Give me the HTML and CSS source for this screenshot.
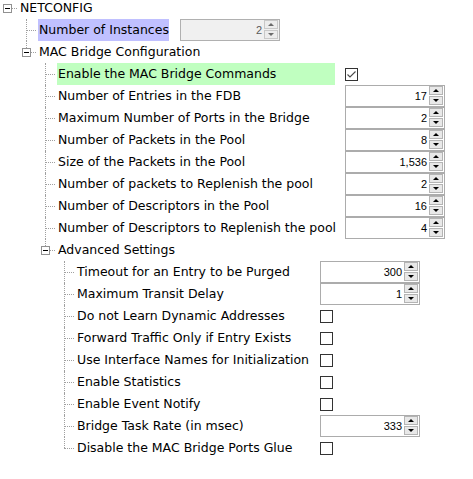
FILE: index.html
```html
<!DOCTYPE html>
<html>
<head>
<meta charset="utf-8">
<link rel="stylesheet" href="styles.css">
</head>
<body>
<div class="tree">
  <div class="lbl exp root"><span class="box"></span>NETCONFIG</div>
  <div class="group">
    <div class="props l1">
      <div class="lbl sel-blue">Number of Instances</div>
      <div class="ctrl"><div class="spin disabled"><span class="val">2</span><span class="btns"><span class="btn up"></span><span class="btn down"></span></span></div></div>
    </div>
    <div class="lbl exp last"><span class="box"></span>MAC Bridge Configuration</div>
    <div class="group">
      <div class="props l2">
        <div class="lbl sel-green">Enable the MAC Bridge Commands</div>
        <div class="ctrl"><span class="chk"><svg width="11" height="11" viewBox="0 0 11 11"><polyline points="1.5,5.5 4,8 9.5,2.5" fill="none" stroke="#4a4a4a" stroke-width="1.1"/></svg></span></div>
        <div class="lbl">Number of Entries in the FDB</div>
        <div class="ctrl"><div class="spin"><span class="val">17</span><span class="btns"><span class="btn up"></span><span class="btn down"></span></span></div></div>
        <div class="lbl">Maximum Number of Ports in the Bridge</div>
        <div class="ctrl"><div class="spin"><span class="val">2</span><span class="btns"><span class="btn up"></span><span class="btn down"></span></span></div></div>
        <div class="lbl">Number of Packets in the Pool</div>
        <div class="ctrl"><div class="spin"><span class="val">8</span><span class="btns"><span class="btn up"></span><span class="btn down"></span></span></div></div>
        <div class="lbl">Size of the Packets in the Pool</div>
        <div class="ctrl"><div class="spin"><span class="val">1,536</span><span class="btns"><span class="btn up"></span><span class="btn down"></span></span></div></div>
        <div class="lbl">Number of packets to Replenish the pool</div>
        <div class="ctrl"><div class="spin"><span class="val">2</span><span class="btns"><span class="btn up"></span><span class="btn down"></span></span></div></div>
        <div class="lbl">Number of Descriptors in the Pool</div>
        <div class="ctrl"><div class="spin"><span class="val">16</span><span class="btns"><span class="btn up"></span><span class="btn down"></span></span></div></div>
        <div class="lbl">Number of Descriptors to Replenish the pool</div>
        <div class="ctrl"><div class="spin"><span class="val">4</span><span class="btns"><span class="btn up"></span><span class="btn down"></span></span></div></div>
      </div>
      <div class="lbl exp last"><span class="box"></span>Advanced Settings</div>
      <div class="group">
        <div class="props l3">
          <div class="lbl">Timeout for an Entry to be Purged</div>
          <div class="ctrl"><div class="spin"><span class="val">300</span><span class="btns"><span class="btn up"></span><span class="btn down"></span></span></div></div>
          <div class="lbl">Maximum Transit Delay</div>
          <div class="ctrl"><div class="spin"><span class="val">1</span><span class="btns"><span class="btn up"></span><span class="btn down"></span></span></div></div>
          <div class="lbl">Do not Learn Dynamic Addresses</div>
          <div class="ctrl"><span class="chk"></span></div>
          <div class="lbl">Forward Traffic Only if Entry Exists</div>
          <div class="ctrl"><span class="chk"></span></div>
          <div class="lbl">Use Interface Names for Initialization</div>
          <div class="ctrl"><span class="chk"></span></div>
          <div class="lbl">Enable Statistics</div>
          <div class="ctrl"><span class="chk"></span></div>
          <div class="lbl">Enable Event Notify</div>
          <div class="ctrl"><span class="chk"></span></div>
          <div class="lbl">Bridge Task Rate (in msec)</div>
          <div class="ctrl"><div class="spin"><span class="val">333</span><span class="btns"><span class="btn up"></span><span class="btn down"></span></span></div></div>
          <div class="lbl last">Disable the MAC Bridge Ports Glue</div>
          <div class="ctrl"><span class="chk"></span></div>
        </div>
      </div>
    </div>
  </div>
</div>
</body>
</html>
```
FILE: styles.css
```css
body {
  margin: 0;
  background: #fff;
  color: #000;
  font-family: "DejaVu Sans", Verdana, sans-serif;
  font-size: 12.5px;
}

.tree {
  padding-left: 19px;
  margin-top: -3px;
}

.group {
  padding-left: 19px;
}

.props {
  display: grid;
  grid-auto-rows: 22px;
  align-items: center;
}

.props.l1 { grid-template-columns: 131px 100px; column-gap: 11px; }
.props.l2 { grid-template-columns: 278px 100px; column-gap: 10px; }
.props.l3 { grid-template-columns: 234px 100px; column-gap: 10px; }

.lbl {
  position: relative;
  height: 22px;
  line-height: 22px;
  padding-left: 1px;
  white-space: nowrap;
}

.lbl::before {
  content: "";
  position: absolute;
  left: -12px;
  top: 11px;
  width: 10px;
  border-top: 1px dotted #a0a0a0;
}

.lbl::after {
  content: "";
  position: absolute;
  left: -12px;
  top: 0;
  height: 22px;
  border-left: 1px dotted #a0a0a0;
}

.lbl.last::after { height: 11px; }

.lbl.exp::before { left: -7px; width: 5px; }
.lbl.exp.last::after { height: 7px; }
.lbl.root::after { display: none; }

.sel-blue { background: #c0c0ff; }
.sel-green { background: #c0ffc0; }

.box {
  position: absolute;
  left: -16px;
  top: 7px;
  width: 9px;
  height: 9px;
  box-sizing: border-box;
  border: 1px solid #919191;
  background: #fff;
}

.box::after {
  content: "";
  position: absolute;
  left: 1px;
  top: 3px;
  width: 5px;
  height: 1px;
  background: #000;
}

.ctrl {
  height: 22px;
  display: flex;
  align-items: center;
}

.spin {
  display: flex;
  width: 100px;
  height: 22px;
  box-sizing: border-box;
  border: 1px solid #acacac;
  background: #fff;
}

.val {
  flex: 1;
  text-align: right;
  font-family: "Liberation Sans", Arial, sans-serif;
  font-size: 11px;
  line-height: 20px;
  padding-right: 2px;
}

.btns {
  display: flex;
  flex-direction: column;
  gap: 1px;
  width: 14px;
  margin: 0 1px 0 0;
}

.btn {
  position: relative;
  height: 9px;
  box-sizing: border-box;
  border: 1px solid #b4b4b4;
  background: #e8e8e8;
}

.btn::after {
  content: "";
  position: absolute;
  left: 3px;
  width: 0;
  height: 0;
  border-left: 3px solid transparent;
  border-right: 3px solid transparent;
}

.btn.up::after { top: 2px; border-bottom: 3px solid #000; }
.btn.down::after { top: 2px; border-top: 3px solid #000; }

.spin.disabled { background: #f0f0f0; border-color: #b0b0b0; }
.spin.disabled .val { color: #5a5a5a; }
.spin.disabled .btn { background: #ececec; border-color: #c8c8c8; }
.spin.disabled .btn.up::after { border-bottom-color: #6a6a6a; }
.spin.disabled .btn.down::after { border-top-color: #6a6a6a; }

.chk {
  display: flex;
  align-items: center;
  justify-content: center;
  width: 13px;
  height: 13px;
  box-sizing: border-box;
  border: 1px solid #333;
  background: #fff;
}
```
